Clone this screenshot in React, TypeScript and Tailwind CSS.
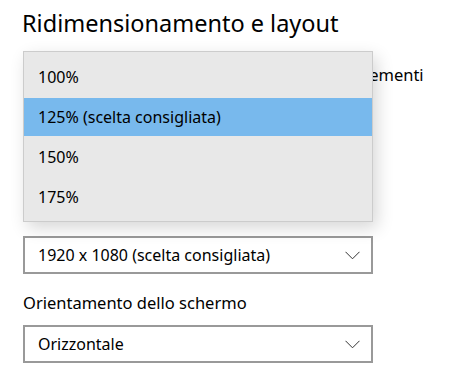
const options = ["100%", "125% (scelta consigliata)", "150%", "175%"];

function Chevron() {
  return (
    <svg width="15" height="9" viewBox="0 0 15 9" fill="none" className="shrink-0">
      <path d="M0.5 0.8 L7.5 7.8 L14.5 0.8" stroke="#333333" strokeWidth="1" />
    </svg>
  );
}

function Select({ value }: { value: string }) {
  return (
    <div className="flex h-[38px] w-[350px] items-center justify-between border-2 border-[#999999] bg-white pl-[13px] pr-[11px]">
      <span className="text-[16px] leading-none text-black">{value}</span>
      <Chevron />
    </div>
  );
}

export default function App() {
  const selected = 1;

  return (
    <div className="relative h-[388px] w-[462px] overflow-hidden bg-white pl-[23px] font-['Noto_Sans',sans-serif] text-black">
      <h1 className="-ml-[1px] text-[23.5px] leading-[46px] font-normal">
        Ridimensionamento e layout
      </h1>
      <p className="mt-[18px] text-[16.5px] leading-[22px] whitespace-nowrap">
        Modifica la dimensione di testo, app e altri elementi
      </p>
      <div className="mt-[150px]">
        <Select value="1920 x 1080 (scelta consigliata)" />
      </div>
      <p className="mt-[18px] text-[16.5px] leading-[22px]">Orientamento dello schermo</p>
      <div className="mt-[11px]">
        <Select value="Orizzontale" />
      </div>

      <div className="absolute top-[51px] left-[23px] flex w-[350px] flex-col gap-[2px] border border-[#cccccc] bg-[#e8e8e8] pt-[6px] pb-[5px] shadow-[4px_6px_16px_rgba(0,0,0,0.16)]">
        {options.map((o, i) => (
          <div
            key={o}
            className={
              i === selected
                ? "flex h-[38px] items-center bg-[#78b9ed] pl-[14px] text-[16px] leading-none"
                : "flex h-[38px] items-center pl-[14px] text-[16px] leading-none"
            }
          >
            {o}
          </div>
        ))}
      </div>
    </div>
  );
}
